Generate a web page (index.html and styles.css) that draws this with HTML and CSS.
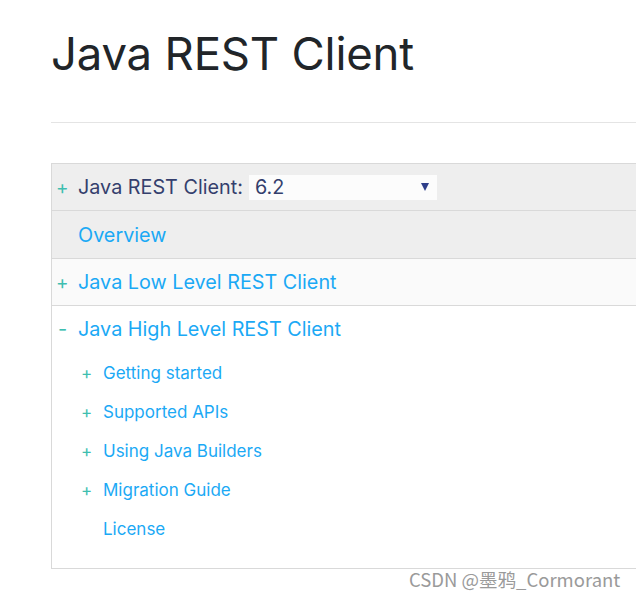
FILE: index.html
```html
<!DOCTYPE html>
<html>
<head>
<meta charset="utf-8">
<link rel="stylesheet" href="styles.css">
</head>
<body>
<div class="page">
  <h1 class="title">Java REST Client</h1>
  <hr class="rule">
  <div class="toc">
    <div class="row row-head">
      <span class="toggle">+</span>
      <span class="head-label">Java REST Client:</span>
      <span class="select"><span class="sel-value">6.2</span><span class="sel-arrow"></span></span>
    </div>
    <div class="row row-gray">
      <span class="toggle"></span>
      <a class="link">Overview</a>
    </div>
    <div class="row row-light">
      <span class="toggle">+</span>
      <a class="link">Java Low Level REST Client</a>
    </div>
    <div class="row row-white">
      <span class="toggle minus">-</span>
      <a class="link">Java High Level REST Client</a>
    </div>
    <ul class="sub">
      <li class="sub-item"><span class="sub-toggle">+</span><a class="sub-link">Getting started</a></li>
      <li class="sub-item"><span class="sub-toggle">+</span><a class="sub-link">Supported APIs</a></li>
      <li class="sub-item"><span class="sub-toggle">+</span><a class="sub-link">Using Java Builders</a></li>
      <li class="sub-item"><span class="sub-toggle">+</span><a class="sub-link">Migration Guide</a></li>
      <li class="sub-item"><span class="sub-toggle"></span><a class="sub-link">License</a></li>
    </ul>
  </div>
</div>
<div class="watermark">CSDN @墨鸦_Cormorant</div>
</body>
</html>
```
FILE: styles.css
```css
html, body {
  margin: 0;
  padding: 0;
  background: #ffffff;
  overflow: hidden;
}
body {
  width: 636px;
  height: 598px;
  position: relative;
  font-family: Inter, "Noto Sans", sans-serif;
}
.page {
  padding-left: 51px;
  padding-top: 26px;
}
.title {
  margin: 0;
  font-weight: 400;
  font-size: 45.5px;
  line-height: 56px;
  color: #212529;
  letter-spacing: -0.2px;
}
.rule {
  margin: 40px 0 0 0;
  border: 0;
  border-top: 1px solid #e4e4e4;
  height: 0;
}
.toc {
  margin-top: 40px;
  border: 1px solid #d9d9d9;
  border-right: 0;
  width: 584px;
  padding-bottom: 20px;
}
.row {
  display: flex;
  align-items: center;
  height: 46px;
  border-bottom: 1px solid #d9d9d9;
  font-size: 19.8px;
}
.row-gray { height: 47px; }
.row-head, .row-gray { background: #eeeeee; }
.row-light { background: #fafafa; }
.row-white { background: #ffffff; border-bottom: 0; height: 46px; }
.toggle {
  width: 26px;
  padding-left: 4px;
  box-sizing: border-box;
  color: #3ebeb0;
  font-size: 19px;
}
.toggle.minus { font-size: 20px; padding-left: 6px; }
.head-label {
  color: #343f6d;
}
.select {
  margin-left: 6px;
  width: 188px;
  height: 25px;
  background: #fcfcfc;
  display: flex;
  align-items: center;
  justify-content: space-between;
  padding: 0 8px 0 6px;
  box-sizing: border-box;
  color: #343f6d;
}
.sel-arrow {
  width: 0;
  height: 0;
  border-left: 4px solid transparent;
  border-right: 4px solid transparent;
  border-top: 8px solid #2f3f8a;
}
.link {
  color: #1ba9f5;
}
.sub {
  list-style: none;
  margin: 0;
  padding: 1px 0 0 0;
}
.sub-item {
  display: flex;
  align-items: center;
  height: 39px;
  font-size: 17px;
}
.sub-toggle {
  width: 51px;
  padding-left: 29px;
  box-sizing: border-box;
  color: #3ebeb0;
  font-size: 17px;
}
.sub-link {
  color: #1ba9f5;
}
.watermark {
  position: absolute;
  left: 409px;
  top: 566px;
  font-family: "Noto Sans CJK SC", sans-serif;
  font-size: 18.5px;
  color: #9a9a9a;
  line-height: 26px;
}
```
